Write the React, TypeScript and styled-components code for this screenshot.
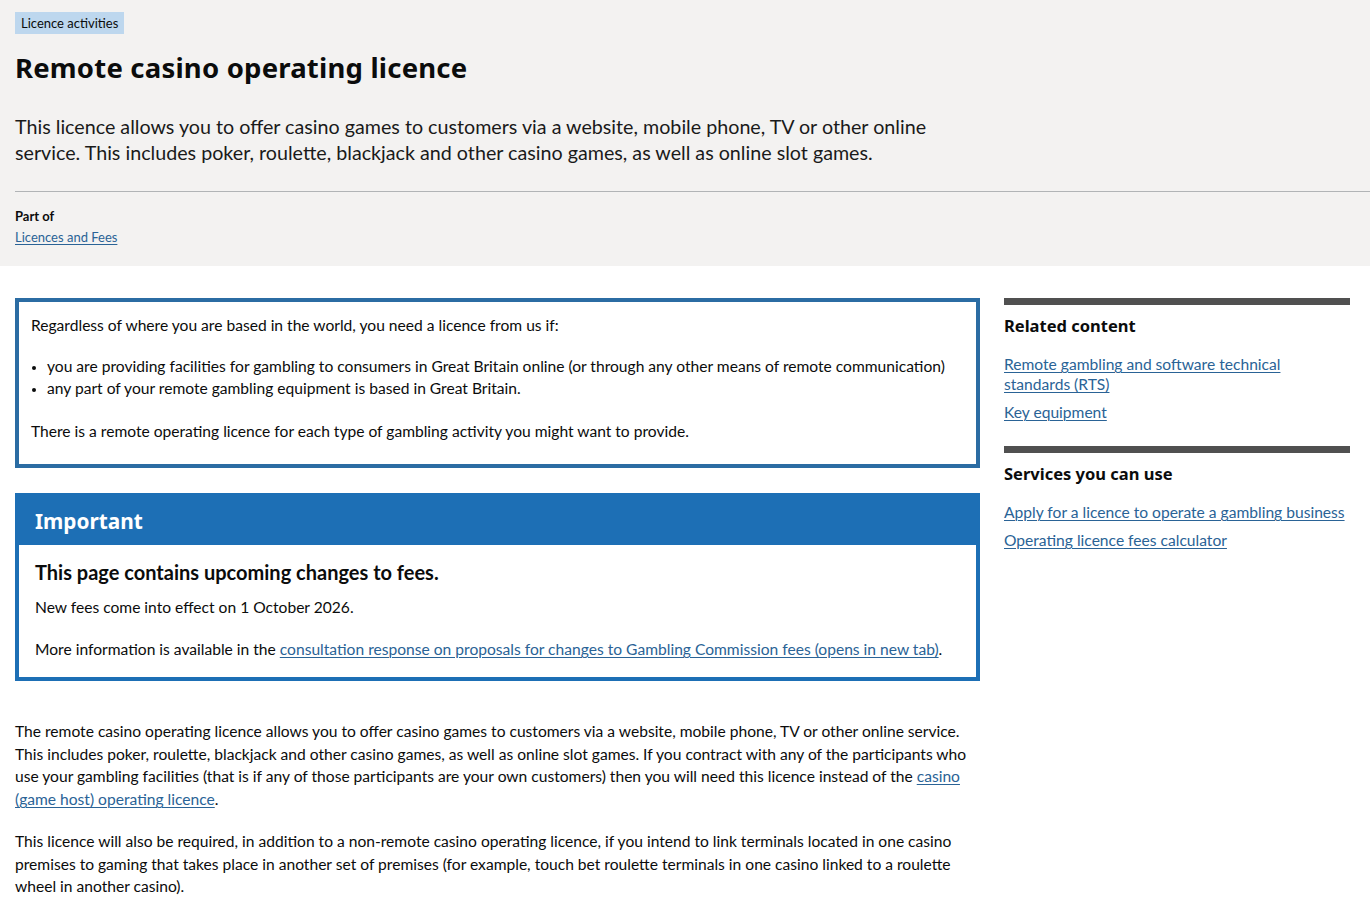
import React from "react";
import styled, { createGlobalStyle } from "styled-components";

const Global = createGlobalStyle`
  html, body { margin: 0; padding: 0; background: #ffffff; }
  body { font-family: "Lato", "Noto Sans", sans-serif; color: #0b0c0c; }
  * { box-sizing: border-box; }
`;

const Header = styled.header`
  background: #f3f2f1;
  padding: 12px 0 20px 15px;
`;

const Tag = styled.span`
  display: inline-block;
  background: #bdd7ee;
  color: #0b0c0c;
  font-size: 13px;
  line-height: 22px;
  padding: 0 6px;
`;

const Title = styled.h1`
  font-family: "Noto Sans", sans-serif;
  font-weight: 700;
  font-size: 27.5px;
  letter-spacing: 0.2px;
  line-height: 36px;
  margin: 16px 0 28px;
`;

const Lead = styled.p`
  font-size: 19.7px;
  line-height: 26px;
  margin: 0 0 25px;
  max-width: 935px;
  color: #1a1a1a;
`;

const Divider = styled.hr`
  border: 0;
  border-top: 1px solid #b1b4b6;
  margin: 0 0 14px;
`;

const PartLabel = styled.div`
  font-size: 13px;
  font-weight: 700;
  line-height: 20px;
`;

const Link = styled.a`
  color: #2a6396;
  text-decoration: underline;
  text-underline-offset: 2px;
  text-decoration-thickness: 1px;
`;

const SmallLink = styled(Link)`
  display: inline-block;
  font-size: 13px;
  line-height: 18px;
`;

const Main = styled.main`
  display: grid;
  grid-template-columns: 965px 346px;
  gap: 24px;
  padding: 32px 15px 20px;
`;

const Column = styled.div`
  display: flex;
  flex-direction: column;
`;

const InsetBox = styled.div`
  border: 4px solid #2b6ca3;
  padding: 12px 12px 22px;
  font-size: 15.6px;
  line-height: 22px;
  margin-bottom: 25px;
`;

const Para = styled.p<{ $mb?: number; $lh?: number }>`
  margin: 0 0 ${(p) => p.$mb ?? 19}px;
  font-size: 15.6px;
  line-height: ${(p) => p.$lh ?? 22.7}px;
`;

const List = styled.ul`
  margin: 0 0 21px;
  padding-left: 16px;
  font-size: 15.6px;
  line-height: 22px;
  li::marker { font-size: 13px; }
`;

const Notice = styled.section`
  border: 4px solid #1d6fb5;
  margin-bottom: 39px;
`;

const NoticeHead = styled.div`
  background: #1d6fb5;
  color: #ffffff;
  font-family: "Noto Sans", sans-serif;
  font-weight: 700;
  font-size: 20.8px;
  line-height: 48px;
  padding: 0 16px;
`;

const NoticeBody = styled.div`
  padding: 14px 16px 17px;
`;

const NoticeTitle = styled.h2`
  font-size: 20px;
  font-weight: 700;
  line-height: 26px;
  margin: 0 0 11px;
`;

const SideBlock = styled.section`
  border-top: 7px solid #505050;
  padding-top: 9px;
  margin-bottom: 24px;
`;

const SideTitle = styled.h2`
  font-family: "Noto Sans", sans-serif;
  font-size: 16.5px;
  font-weight: 700;
  line-height: 24px;
  margin: 0 0 16px;
`;

const SideLinks = styled.ul<{ $narrow?: boolean }>`
  list-style: none;
  margin: 0;
  padding: 0;
  display: flex;
  flex-direction: column;
  gap: 8px;
  font-size: 15.6px;
  line-height: 20px;
  max-width: ${(p) => (p.$narrow ? "300px" : "none")};
`;

export default function App() {
  return (
    <>
      <Global />
      <Header>
        <Tag>Licence activities</Tag>
        <Title>Remote casino operating licence</Title>
        <Lead>
          This licence allows you to offer casino games to customers via a website, mobile phone, TV or other online
          service. This includes poker, roulette, blackjack and other casino games, as well as online slot games.
        </Lead>
        <Divider />
        <PartLabel>Part of</PartLabel>
        <SmallLink href="#">Licences and Fees</SmallLink>
      </Header>
      <Main>
        <Column>
          <InsetBox>
            <Para $mb={19} $lh={22}>
              Regardless of where you are based in the world, you need a licence from us if:
            </Para>
            <List>
              <li>
                you are providing facilities for gambling to consumers in Great Britain online (or through any other
                means of remote communication)
              </li>
              <li>any part of your remote gambling equipment is based in Great Britain.</li>
            </List>
            <Para $mb={0} $lh={22}>
              There is a remote operating licence for each type of gambling activity you might want to provide.
            </Para>
          </InsetBox>
          <Notice>
            <NoticeHead>Important</NoticeHead>
            <NoticeBody>
              <NoticeTitle>This page contains upcoming changes to fees.</NoticeTitle>
              <Para $mb={20} $lh={22}>New fees come into effect on 1 October 2026.</Para>
              <Para $mb={0} $lh={22}>
                More information is available in the{" "}
                <Link href="#">
                  consultation response on proposals for changes to Gambling Commission fees (opens in new tab)
                </Link>
                .
              </Para>
            </NoticeBody>
          </Notice>
          <Para>
            The remote casino operating licence allows you to offer casino games to customers via a website, mobile
            phone, TV or other online service. This includes poker, roulette, blackjack and other casino games, as well
            as online slot games. If you contract with any of the participants who use your gambling facilities (that
            is if any of those participants are your own customers) then you will need this licence instead of the{" "}
            <Link href="#">casino (game host) operating licence</Link>.
          </Para>
          <Para>
            This licence will also be required, in addition to a non-remote casino operating licence, if you intend to
            link terminals located in one casino premises to gaming that takes place in another set of premises (for
            example, touch bet roulette terminals in one casino linked to a roulette wheel in another casino).
          </Para>
        </Column>
        <Column>
          <SideBlock>
            <SideTitle>Related content</SideTitle>
            <SideLinks $narrow>
              <li>
                <Link href="#">Remote gambling and software technical standards (RTS)</Link>
              </li>
              <li>
                <Link href="#">Key equipment</Link>
              </li>
            </SideLinks>
          </SideBlock>
          <SideBlock>
            <SideTitle>Services you can use</SideTitle>
            <SideLinks>
              <li>
                <Link href="#">Apply for a licence to operate a gambling business</Link>
              </li>
              <li>
                <Link href="#">Operating licence fees calculator</Link>
              </li>
            </SideLinks>
          </SideBlock>
        </Column>
      </Main>
    </>
  );
}
